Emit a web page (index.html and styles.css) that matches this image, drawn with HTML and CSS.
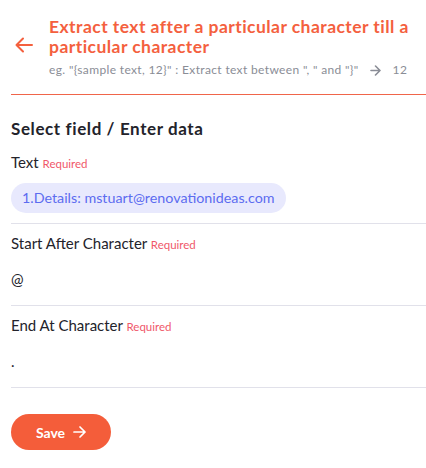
FILE: index.html
```html
<!DOCTYPE html>
<html>
<head>
<meta charset="utf-8">
<link rel="stylesheet" href="styles.css">
</head>
<body>
<div class="page">
  <header class="header">
    <button class="back" aria-label="Back">
      <svg width="18" height="16" viewBox="0 0 18 16" fill="none" stroke="#f4603e" stroke-width="2" stroke-linecap="round" stroke-linejoin="round"><path d="M17 8H1.5M8 1.5 1.5 8 8 14.5"/></svg>
    </button>
    <div class="header-text">
      <h1 class="title">Extract text after a particular character till a particular character</h1>
      <div class="example"><span>eg. "{sample text, 12}" : Extract text between ", " and "}"</span><svg class="ex-arrow" width="11" height="11" viewBox="0 0 11 11" fill="none" stroke="#8a8d96" stroke-width="1.6" stroke-linecap="round" stroke-linejoin="round"><path d="M1 5.5h9M5.5 1 10 5.5 5.5 10"/></svg><span>12</span></div>
    </div>
  </header>
  <main class="content">
    <h2 class="section-title">Select field / Enter data</h2>
    <div class="field">
      <div class="label first">Text <span class="req">Required</span></div>
      <div class="value"><span class="chip">1.Details: mstuart@renovationideas.com</span></div>
    </div>
    <div class="field">
      <div class="label">Start After Character <span class="req">Required</span></div>
      <div class="value plain">@</div>
    </div>
    <div class="field">
      <div class="label">End At Character <span class="req">Required</span></div>
      <div class="value plain">.</div>
    </div>
    <button class="save">Save <svg width="13" height="12" viewBox="0 0 13 12" fill="none" stroke="#fff" stroke-width="1.7" stroke-linecap="round" stroke-linejoin="round"><path d="M1 6h11M7 1l5 5-5 5"/></svg></button>
  </main>
</div>
</body>
</html>
```
FILE: styles.css
```css
* { box-sizing: border-box; }
html, body { margin: 0; padding: 0; background: #fff; }
body {
  font-family: "Lato", "Noto Sans", sans-serif;
  color: #23232b;
}
.page { width: 426px; }
.header {
  display: flex;
  align-items: flex-start;
  margin-left: 11px;
  padding: 17px 0 17px 4px;
  border-bottom: 1.5px solid #f0654a;
}
.back {
  border: 0;
  background: none;
  padding: 0;
  margin: 20px 16px 0 0;
  width: 18px;
  height: 16px;
  display: flex;
}
.header-text { flex: 1; }
.title {
  margin: 0;
  font-size: 17.5px;
  line-height: 20px;
  font-weight: 700;
  color: #f4603e;
  letter-spacing: 0.45px;
}
.example {
  margin-top: 6px;
  font-size: 12px;
  line-height: 14px;
  color: #8a8d96;
  display: flex;
  align-items: center;
  letter-spacing: 0.35px;
  white-space: pre;
}
.ex-arrow { margin: 0 12px 0 11px; }
.content { padding-left: 11px; }
.section-title {
  margin: 24px 0 0;
  font-size: 17px;
  line-height: 20px;
  font-weight: 700;
  color: #23232b;
  letter-spacing: 0.6px;
}
.field {
  border-bottom: 1.5px solid #e1e1ea;
}
.label {
  font-size: 15px;
  line-height: 18px;
  color: #23232b;
  padding-top: 10px;
}
.label.first { padding-top: 14px; }
.req {
  font-size: 11.5px;
  color: #f0586a;
}
.value { padding: 10px 0 10px; }
.chip {
  display: inline-block;
  background: #e8e9fd;
  color: #5c6cf0;
  font-size: 14.3px;
  line-height: 30px;
  padding: 0 11px;
  border-radius: 15px;
}
.value.plain {
  font-size: 15px;
  line-height: 18px;
  padding: 16px 0 17px;
}
.save {
  margin-top: 26px;
  width: 100px;
  height: 36px;
  border: 0;
  border-radius: 18px;
  background: #f45d3a;
  color: #fff;
  font-family: inherit;
  font-size: 14px;
  font-weight: 700;
  display: flex;
  align-items: center;
  justify-content: center;
  gap: 8px;
}
```
